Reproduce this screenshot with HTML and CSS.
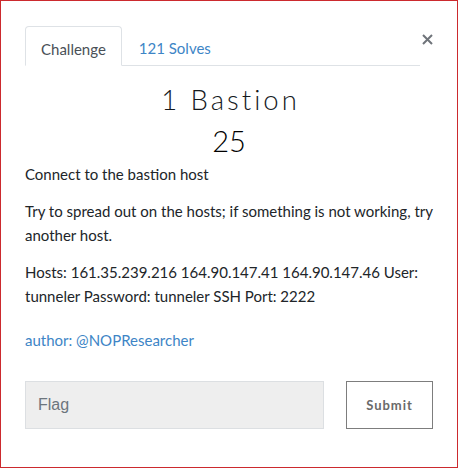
FILE: index.html
```html
<!DOCTYPE html>
<html>
<head>
<meta charset="utf-8">
<link rel="stylesheet" href="styles.css">
</head>
<body>
<div class="frame">
  <div class="modal">
    <div class="header">
      <ul class="tabs">
        <li class="tab active">Challenge</li>
        <li class="tab link">121 Solves</li>
      </ul>
      <div class="close">
        <svg width="11" height="11" viewBox="0 0 11 11"><path d="M1 1 L10 10 M10 1 L1 10" stroke="#6f747a" stroke-width="2" fill="none"/></svg>
      </div>
    </div>
    <h3 class="name">1 Bastion</h3>
    <h4 class="value">25</h4>
    <div class="desc">
      <p>Connect to the bastion host</p>
      <p>Try to spread out on the hosts; if something is not working, try another host.</p>
      <p>Hosts: 161.35.239.216 164.90.147.41 164.90.147.46 User: tunneler Password: tunneler SSH Port: 2222</p>
      <p class="author">author: @NOPResearcher</p>
    </div>
    <div class="submit-row">
      <div class="flag">Flag</div>
      <div class="btn">Submit</div>
    </div>
  </div>
</div>
</body>
</html>
```
FILE: styles.css
```css
* { box-sizing: border-box; }
html, body { margin: 0; padding: 0; background: #fff; }
.frame {
  width: 458px;
  height: 468px;
  border: 1px solid #cc2a2e;
  font-family: Lato, "Noto Sans", sans-serif;
  color: #212529;
}
.modal { padding: 25px 24px 0 24px; }
.header { display: flex; align-items: flex-start; }
.tabs {
  flex: 1;
  display: flex;
  list-style: none;
  margin: 0;
  padding: 0;
  border-bottom: 1px solid #dee2e6;
  height: 40px;
}
.tab {
  font-size: 15px;
  line-height: 20px;
  padding: 12px 15px 7px 15px;
  height: 40px;
}
.tab.active {
  color: #495057;
  border: 1px solid #dee2e6;
  border-bottom-color: #fff;
  border-radius: 4px 4px 0 0;
  background: #fff;
}
.tab.link { color: #3d85c6; padding-left: 17px; }
.close {
  width: 13px;
  padding-top: 8px;
  display: flex;
  justify-content: flex-end;
}
.close svg { display: block; }
.name {
  margin: 18px 0 0 0;
  text-align: center;
  font-weight: 300;
  font-size: 27.5px;
  line-height: 32px;
  letter-spacing: 3px;
  padding-left: 3px;
  color: #15191d;
}
.value {
  margin: 8px 0 0 0;
  text-align: center;
  font-weight: 300;
  font-size: 29px;
  line-height: 34px;
  color: #000;
}
.desc { margin-top: 4px; font-size: 15px; line-height: 24px; }
.desc p { margin: 0 0 13px 0; }
.desc .author { color: #3d85c6; margin-top: 20px; }
.submit-row { display: flex; gap: 22px; margin-top: 29px; }
.flag {
  width: 299px;
  height: 48px;
  background: #eeeeee;
  border: 1px solid #dcdfe2;
  color: #6c757d;
  font-family: "Liberation Sans", Arial, sans-serif;
  font-size: 16px;
  line-height: 46px;
  padding-left: 12px;
}
.btn {
  width: 87px;
  height: 48px;
  border: 1px solid #7d7d7d;
  color: #6a6a6a;
  font-weight: bold;
  font-size: 13px;
  letter-spacing: 1px;
  line-height: 46px;
  text-align: center;
}
```
